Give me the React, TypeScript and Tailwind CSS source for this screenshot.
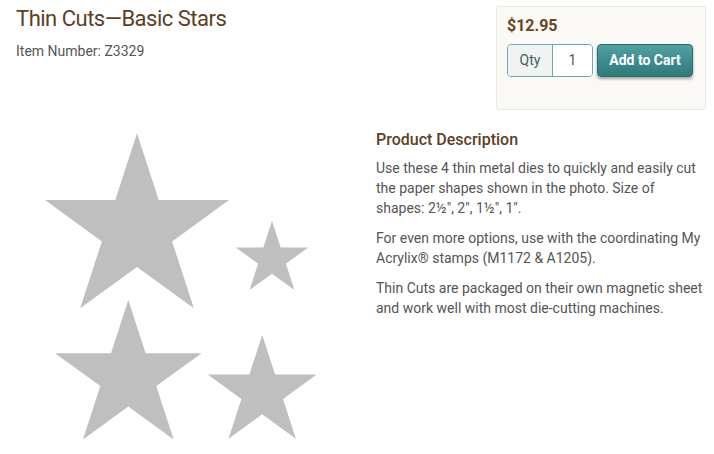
import React from "react";

function starPoints(cx: number, cy: number, R: number): string {
  const pts: string[] = [];
  for (let i = 0; i < 10; i++) {
    const a = ((-90 + i * 36) * Math.PI) / 180;
    const r = i % 2 === 0 ? R : R * 0.382;
    pts.push(`${(cx + r * Math.cos(a)).toFixed(2)},${(cy + r * Math.sin(a)).toFixed(2)}`);
  }
  return pts.join(" ");
}

const stars = [
  { cx: 137, cy: 230, R: 96.7 },
  { cx: 272, cy: 259.2, R: 38.2 },
  { cx: 128.3, cy: 377, R: 77.1 },
  { cx: 262.2, cy: 392.3, R: 57.3 },
];

export default function App() {
  return (
    <div
      className="w-[714px] h-[454px] bg-white overflow-hidden flex flex-col"
      style={{ fontFamily: "Roboto, 'Liberation Sans', sans-serif" }}
    >
      <div className="h-[120px] flex justify-between shrink-0">
        <div className="pl-4 pt-[5px]">
          <h1 className="text-[22px] leading-[28px] tracking-[-0.5px] text-[#5e3e1f]">Thin Cuts—Basic Stars</h1>
          <div className="mt-[8px] text-[14px] leading-[20px] text-[#555555]">Item Number: Z3329</div>
        </div>
        <div className="mt-[6px] mr-[8px] w-[210px] h-[104px] bg-[#faf9f5] border border-[#ebe9e3] rounded-[3px] pl-[10px] pt-[7px]">
          <div className="text-[16px] leading-[24px] font-bold text-[#6a4526]">$12.95</div>
          <div className="mt-[6px] flex">
            <div className="flex h-[33px] border border-[#6aa9a9] rounded-[4px] overflow-hidden">
              <div className="w-[45px] bg-[#f1f3f3] border-r border-[#6aa9a9] flex items-center justify-center text-[14px] text-[#3f5f60]">
                Qty
              </div>
              <div className="w-[39px] bg-white flex items-center justify-center text-[14px] text-[#555555]">1</div>
            </div>
            <button className="ml-[4px] w-[96px] h-[33px] rounded-[4px] border border-[#2a6c6f] bg-gradient-to-b from-[#52a0a2] to-[#2d7a7d] text-white font-bold text-[14px] shadow-[0_2px_3px_rgba(0,0,0,0.35)]">
              Add to Cart
            </button>
          </div>
        </div>
      </div>
      <div className="flex flex-1">
        <svg width="360" height="334" viewBox="0 120 360 334" className="shrink-0">
          {stars.map((s, i) => (
            <polygon key={i} points={starPoints(s.cx, s.cy, s.R)} fill="#bfbfbf" />
          ))}
        </svg>
        <div className="ml-[16px] pt-[8px] text-[#555555]">
          <h2 className="text-[16px] leading-[24px] font-medium text-[#5e3e1f]">Product Description</h2>
          <p className="mt-[6px] text-[14px] leading-[20px] whitespace-nowrap">
            Use these 4 thin metal dies to quickly and easily cut
            <br />
            the paper shapes shown in the photo. Size of
            <br />
            shapes: 2½", 2", 1½", 1".
          </p>
          <p className="mt-[10px] text-[14px] leading-[20px] whitespace-nowrap">
            For even more options, use with the coordinating My
            <br />
            Acrylix® stamps (M1172 &amp; A1205).
          </p>
          <p className="mt-[10px] text-[14px] leading-[20px] whitespace-nowrap">
            Thin Cuts are packaged on their own magnetic sheet
            <br />
            and work well with most die-cutting machines.
          </p>
        </div>
      </div>
    </div>
  );
}
